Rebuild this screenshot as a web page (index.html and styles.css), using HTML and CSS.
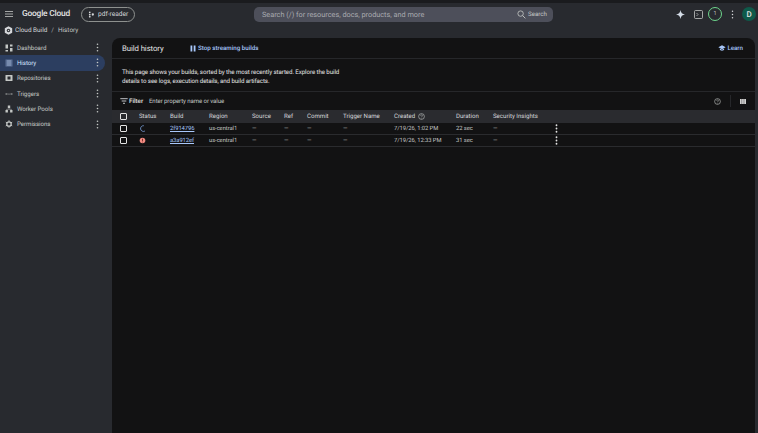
FILE: index.html
```html
<!DOCTYPE html>
<html lang="en">
<head>
<meta charset="utf-8">
<title>Build history</title>
<link rel="stylesheet" href="styles.css">
</head>
<body>
<div class="app">
  <header class="topbar">
    <svg class="menu-icon" viewBox="0 0 8 6"><path d="M0 .5h8M0 3h8M0 5.500h8" stroke="#c4c7c5" stroke-width=".8"/></svg>
    <span class="logo">Google Cloud</span>
    <div class="project">
      <svg class="ico7" viewBox="0 0 8 8"><circle cx="2" cy="1.500" r="1" fill="#d5d7da"/><circle cx="2" cy="4" r="1" fill="#d5d7da"/><circle cx="2" cy="6.500" r="1" fill="#d5d7da"/><circle cx="5.500" cy="4" r="1.300" fill="#d5d7da"/></svg>
      <span>pdf-reader</span>
    </div>
    <div class="search">
      <span class="search-hint">Search (/) for resources, docs, products, and more</span>
      <span class="search-btn">
        <svg class="ico9" viewBox="0 0 10 10"><circle cx="4" cy="4" r="3" fill="none" stroke="#c4c7c5" stroke-width=".9"/><path d="M6.200 6.200 9.300 9.300" stroke="#c4c7c5" stroke-width="1"/></svg>
        Search
      </span>
    </div>
    <div class="actions">
      <svg class="spark" viewBox="0 0 10 10"><path d="M5 0C5.400 3 7 4.600 10 5 7 5.400 5.400 7 5 10 4.600 7 3 5.400 0 5 3 4.600 4.600 3 5 0Z" fill="#d5dde8"/></svg>
      <svg class="term" viewBox="0 0 9 9"><rect x=".5" y=".5" width="8" height="8" rx="1" fill="none" stroke="#c4c7c5" stroke-width=".8"/><path d="M2.500 3 4 4.500 2.500 6" fill="none" stroke="#c4c7c5" stroke-width=".7"/></svg>
      <span class="badge">1</span>
      <svg class="kebab" viewBox="0 0 3 11"><circle cx="1.500" cy="1.500" r=".9" fill="#d5d7da"/><circle cx="1.500" cy="5.500" r=".9" fill="#d5d7da"/><circle cx="1.500" cy="9.500" r=".9" fill="#d5d7da"/></svg>
      <span class="avatar">D</span>
    </div>
  </header>
  <div class="crumbs">
    <svg class="product-icon" viewBox="0 0 10 10"><path d="M5 .3 9.100 2.600V7.400L5 9.700.9 7.400V2.600Z" fill="#d5d7da"/><circle cx="5" cy="5" r="1.900" fill="#282a2f"/><circle cx="5" cy="5" r=".8" fill="#d5d7da"/></svg>
    <span class="crumb-main">Cloud Build</span><span class="crumb-sep">/</span><span class="crumb-sub">History</span>
  </div>
  <div class="body-row">
    <aside class="sidebar">
      <nav class="nav">
        <div class="nav-item">
          <svg class="nav-ico" viewBox="0 0 8 8"><path d="M.5.500h2.500v4H.5zM5 .5h2.500v2H5zM5 4h2.500v3.500H5zM.5 6h2.500v1.500H.5z" fill="#c4c7c5"/></svg>
          <span class="nav-label">Dashboard</span>
          <svg class="nav-kebab" viewBox="0 0 3 11"><circle cx="1.500" cy="1.500" r="1" fill="#c4c7c5"/><circle cx="1.500" cy="5.500" r="1" fill="#c4c7c5"/><circle cx="1.500" cy="9.500" r="1" fill="#c4c7c5"/></svg>
        </div>
        <div class="nav-item is-active">
          <svg class="nav-ico" viewBox="0 0 8 8"><path d="M.5.500h7v7h-7z" fill="#5d7196"/><path d="M2 2h4M2 4h4M2 6h4" stroke="#a9bddb" stroke-width=".7"/></svg>
          <span class="nav-label">History</span>
          <svg class="nav-kebab" viewBox="0 0 3 11"><circle cx="1.500" cy="1.500" r="1" fill="#c4c7c5"/><circle cx="1.500" cy="5.500" r="1" fill="#c4c7c5"/><circle cx="1.500" cy="9.500" r="1" fill="#c4c7c5"/></svg>
        </div>
        <div class="nav-item">
          <svg class="nav-ico" viewBox="0 0 8 8"><rect x=".5" y="1" width="7" height="6" rx=".6" fill="#c4c7c5"/><rect x="2.500" y="2.500" width="3" height="3" fill="#282a2f"/></svg>
          <span class="nav-label">Repositories</span>
          <svg class="nav-kebab" viewBox="0 0 3 11"><circle cx="1.500" cy="1.500" r="1" fill="#c4c7c5"/><circle cx="1.500" cy="5.500" r="1" fill="#c4c7c5"/><circle cx="1.500" cy="9.500" r="1" fill="#c4c7c5"/></svg>
        </div>
        <div class="nav-item">
          <svg class="nav-ico" viewBox="0 0 8 8"><path d="M.5 4h2M5.500 4h2" stroke="#c4c7c5" stroke-width=".9"/><circle cx="4" cy="4" r=".6" fill="#c4c7c5"/></svg>
          <span class="nav-label">Triggers</span>
          <svg class="nav-kebab" viewBox="0 0 3 11"><circle cx="1.500" cy="1.500" r="1" fill="#c4c7c5"/><circle cx="1.500" cy="5.500" r="1" fill="#c4c7c5"/><circle cx="1.500" cy="9.500" r="1" fill="#c4c7c5"/></svg>
        </div>
        <div class="nav-item">
          <svg class="nav-ico" viewBox="0 0 8 8"><path d="M2.800.5h2.400v2.400H2.800zM.5 5h2.400v2.500H.5zM5.100 5h2.400v2.500H5.100z" fill="#c4c7c5"/><path d="M4 3v1.300M1.700 5V4.200h4.600V5" fill="none" stroke="#c4c7c5" stroke-width=".5"/></svg>
          <span class="nav-label">Worker Pools</span>
          <svg class="nav-kebab" viewBox="0 0 3 11"><circle cx="1.500" cy="1.500" r="1" fill="#c4c7c5"/><circle cx="1.500" cy="5.500" r="1" fill="#c4c7c5"/><circle cx="1.500" cy="9.500" r="1" fill="#c4c7c5"/></svg>
        </div>
        <div class="nav-item">
          <svg class="nav-ico" viewBox="0 0 8 8"><circle cx="4" cy="4" r="2.200" fill="none" stroke="#c4c7c5" stroke-width="1.300"/><path d="M4 .3v1.400M4 6.300v1.400M.8 2.200 2 2.900M6 5.100 7.200 5.800M.8 5.800 2 5.100M6 2.900 7.200 2.200" stroke="#c4c7c5" stroke-width="1"/></svg>
          <span class="nav-label">Permissions</span>
          <svg class="nav-kebab" viewBox="0 0 3 11"><circle cx="1.500" cy="1.500" r="1" fill="#c4c7c5"/><circle cx="1.500" cy="5.500" r="1" fill="#c4c7c5"/><circle cx="1.500" cy="9.500" r="1" fill="#c4c7c5"/></svg>
        </div>
      </nav>
    </aside>
    <main class="panel">
      <div class="title-row">
        <h1 class="title">Build history</h1>
        <a class="stream">
          <svg class="pause" viewBox="0 0 6 7"><path d="M.5.500h1.800v6H.5zM3.700.5h1.800v6H3.700z" fill="#a8c7fa"/></svg>
          Stop streaming builds
        </a>
        <a class="learn">
          <svg class="cap" viewBox="0 0 10 8"><path d="M5 .3 9.800 3 5 5.700.2 3Z" fill="#a8c7fa"/><path d="M2.200 4.800V6.500L5 7.800 7.800 6.500V4.800L5 6.300Z" fill="#a8c7fa"/></svg>
          Learn
        </a>
      </div>
      <p class="intro">This page shows your builds, sorted by the most recently started. Explore the build<br>details to see logs, execution details, and build artifacts.</p>
      <div class="filter-row">
        <svg class="filter-ico" viewBox="0 0 8 6"><path d="M.3.700h7.400M1.700 3h4.600M3 5.300h2" stroke="#d5d7da" stroke-width=".9"/></svg>
        <span class="filter-label">Filter</span>
        <span class="filter-hint">Enter property name or value</span>
        <svg class="help-ico" viewBox="0 0 8 8"><circle cx="4" cy="4" r="3.300" fill="none" stroke="#c4c7c5" stroke-width=".7"/><path d="M2.900 3.100C3 1.800 5.100 1.900 5.100 3.100 5.100 3.900 4 3.900 4 4.900" fill="none" stroke="#c4c7c5" stroke-width=".6"/><circle cx="4" cy="6" r=".4" fill="#c4c7c5"/></svg>
        <span class="vsep"></span>
        <svg class="cols-ico" viewBox="0 0 7 6"><path d="M0 0h1.900v6H0zM2.500 0h1.900v6H2.500zM5 0h2v6H5z" fill="#e3e3e3"/></svg>
      </div>
      <div class="table">
        <div class="tr th">
          <span class="c-check"><span class="box"></span></span>
          <span class="c-status">Status</span><span class="c-build">Build</span><span class="c-region">Region</span>
          <span class="c-source">Source</span><span class="c-ref">Ref</span><span class="c-commit">Commit</span>
          <span class="c-trigger">Trigger Name</span>
          <span class="c-created">Created
            <svg class="help-sm" viewBox="0 0 8 8"><circle cx="4" cy="4" r="3.300" fill="none" stroke="#c4c7c5" stroke-width=".7"/><path d="M2.900 3.100C3 1.800 5.100 1.900 5.100 3.100 5.100 3.900 4 3.900 4 4.900" fill="none" stroke="#c4c7c5" stroke-width=".6"/><circle cx="4" cy="6" r=".4" fill="#c4c7c5"/></svg>
          </span>
          <span class="c-duration">Duration</span><span class="c-insights">Security Insights</span>
        </div>
        <div class="tr">
          <span class="c-check"><span class="box"></span></span>
          <span class="c-status"><svg class="spinner" viewBox="0 0 8 8"><path d="M5.500.8A3.400 3.400 0 0 0 1.800 4.600 3.400 3.400 0 0 0 6.800 6.900" fill="none" stroke="#8ab4f8" stroke-width=".8"/></svg></span>
          <span class="c-build"><a class="link">2f914796</a></span><span class="c-region">us-central1</span>
          <span class="c-source">—</span><span class="c-ref">—</span><span class="c-commit">—</span><span class="c-trigger">—</span>
          <span class="c-created">7/19/26, 1:02 PM</span><span class="c-duration">22 sec</span><span class="c-insights">—</span>
          <svg class="row-kebab" viewBox="0 0 3 11"><circle cx="1.500" cy="1.500" r="1.100" fill="#e3e3e3"/><circle cx="1.500" cy="5.500" r="1.100" fill="#e3e3e3"/><circle cx="1.500" cy="9.500" r="1.100" fill="#e3e3e3"/></svg>
        </div>
        <div class="tr">
          <span class="c-check"><span class="box"></span></span>
          <span class="c-status"><svg class="err" viewBox="0 0 8 8"><circle cx="4" cy="4" r="3.200" fill="#f28b82"/><path d="M4 2v2.500M4 5.300v.8" stroke="#5a1a16" stroke-width=".9"/></svg></span>
          <span class="c-build"><a class="link">a3a912ef</a></span><span class="c-region">us-central1</span>
          <span class="c-source">—</span><span class="c-ref">—</span><span class="c-commit">—</span><span class="c-trigger">—</span>
          <span class="c-created">7/19/26, 12:33 PM</span><span class="c-duration">31 sec</span><span class="c-insights">—</span>
          <svg class="row-kebab" viewBox="0 0 3 11"><circle cx="1.500" cy="1.500" r="1.100" fill="#e3e3e3"/><circle cx="1.500" cy="5.500" r="1.100" fill="#e3e3e3"/><circle cx="1.500" cy="9.500" r="1.100" fill="#e3e3e3"/></svg>
        </div>
      </div>
    </main>
  </div>
</div>
</body>
</html>
```

FILE: styles.css
```css
* { box-sizing: border-box; }
html, body { margin: 0; height: 100%; }
body { background: #282a2f; color: #c4c7c5; font-family: Roboto, "Liberation Sans", sans-serif; font-size: 6.200px; overflow: hidden; text-rendering: geometricPrecision; }
.app { height: 433px; display: flex; flex-direction: column; border-top: 3px solid #1a1b1e; }
svg { display: block; flex: none; }

.topbar { height: 22px; display: flex; align-items: center; padding-left: 5px; flex: none; }
.menu-icon { width: 8px; height: 6px; }
.logo { margin-left: 9px; font-size: 8.400px; letter-spacing: -.2px; font-weight: 500; color: #e3e3e3; width: 59px; white-space: nowrap; }
.project { width: 54px; height: 15px; border: 1px solid #8e918f; border-radius: 8px; display: flex; align-items: center; gap: 3px; padding-left: 6px; color: #d5d7da; font-size: 6.600px; }
.ico7 { width: 7px; height: 7px; }
.search { margin-left: 119px; width: 299px; height: 15px; background: #4d4f5a; border-radius: 5px; display: flex; align-items: center; justify-content: space-between; padding: 0 6px 0 8px; color: #a9abb0; font-size: 7.300px; }
.search-btn { display: flex; align-items: center; gap: 2px; color: #c4c7c5; font-size: 6.200px; }
.ico9 { width: 9px; height: 9px; }
.actions { margin-left: 123px; display: flex; align-items: center; }
.spark { width: 9px; height: 9px; }
.term { width: 9px; height: 9px; margin-left: 9px; }
.badge { width: 14px; height: 14px; margin-left: 5px; border: 1px solid #6dd58c; border-radius: 50%; display: flex; align-items: center; justify-content: center; font-size: 5.500px; color: #c4c7c5; }
.kebab { width: 3px; height: 9px; margin-left: 9px; }
.avatar { width: 14px; height: 14px; margin-left: 8px; background: #0e5a4a; border-radius: 50%; display: flex; align-items: center; justify-content: center; font-size: 8px; font-weight: 500; color: #e3e3e3; }

.crumbs { height: 13px; flex: none; display: flex; align-items: center; padding: 0 0 3px 4px; font-size: 6.400px; }
.product-icon { width: 9px; height: 9px; margin-right: 2px; }
.crumb-main { color: #d5d7da; }
.crumb-sep { margin: 0 4px; color: #a9abb0; }
.crumb-sub { color: #c4c7c5; }
.body-row { flex: 1; display: flex; min-height: 0; }
.sidebar { width: 112px; flex: none; }
.nav { margin-top: 2px; display: flex; flex-direction: column; }
.nav-item { width: 105px; height: 15.300px; display: flex; align-items: center; padding: 0 6px 0 5px; border-radius: 0 8px 8px 0; color: #c4c7c5; font-size: 6.200px; letter-spacing: -.07px; }
.nav-item.is-active { background: #2c3e60; color: #d3e3fd; }
.nav-ico { width: 8px; height: 8px; margin-right: 4px; }
.nav-label { flex: 1; white-space: nowrap; }
.nav-kebab { width: 3px; height: 9px; }

.panel { flex: 1; margin-right: 3px; background: #121213; border-radius: 8px 8px 0 0; color: #c4c7c5; display: flex; flex-direction: column; min-width: 0; }
.title-row { height: 21px; display: flex; align-items: center; padding: 0 12px 0 10px; border-bottom: 1px solid #26272a; flex: none; }
.title { margin: 0; font-size: 7.800px; letter-spacing: -.1px; font-weight: 400; color: #e3e3e3; width: 68px; white-space: nowrap; }
.stream { display: flex; align-items: center; gap: 2px; color: #a8c7fa; font-size: 6.200px; font-weight: 500; }
.pause { width: 6px; height: 7px; }
.learn { margin-left: auto; display: flex; align-items: center; gap: 1px; color: #a8c7fa; font-size: 6.200px; font-weight: 500; }
.cap { width: 8px; height: 6px; }
.intro { margin: 0; height: 33px; padding: 9px 10px 0; font-size: 6.200px; letter-spacing: -.1px; line-height: 9px; color: #e3e3e3; border-bottom: 1px solid #26272a; flex: none; }
.filter-row { height: 18px; display: flex; align-items: center; padding: 0 9px 0 8px; flex: none; }
.filter-ico { width: 8px; height: 6px; margin-right: 1px; }
.filter-label { width: 20px; font-weight: 500; color: #e3e3e3; font-size: 6.200px; }
.filter-hint { flex: 1; color: #c4c7c5; font-size: 6.100px; letter-spacing: -.1px; }
.help-ico { width: 7px; height: 7px; }
.vsep { width: 1px; height: 12px; background: #26272a; margin: 0 9px; }
.cols-ico { width: 6px; height: 5px; }

.table { display: flex; flex-direction: column; flex: none; }
.tr { height: 12px; display: flex; align-items: center; border-bottom: 1px solid #2a2b2e; font-size: 5.800px; letter-spacing: -.05px; color: #c4c7c5; white-space: nowrap; }
.tr.th { height: 13px; background: #2a2b2f; color: #d5d7da; font-weight: 400; font-size: 6.100px; letter-spacing: 0; border-bottom: 0; }
.tr > span { flex: none; display: flex; align-items: center; }
.c-check { width: 27px; padding-left: 8px; }
.box { width: 7px; height: 7px; border: 1px solid #e3e3e3; border-radius: 1px; display: block; }
.c-status { width: 31px; }
.c-build { width: 39px; }
.c-region { width: 43px; }
.c-source { width: 32px; }
.c-ref { width: 23px; }
.c-commit { width: 36px; }
.c-trigger { width: 51px; }
.c-created { width: 62px; gap: 3px; }
.c-duration { width: 37px; }
.c-insights { width: 62px; }
.link { color: #a8c7fa; text-decoration: underline; }
.help-sm { width: 7px; height: 7px; }
.spinner, .err { width: 7px; height: 7px; }
.row-kebab { width: 3px; height: 9px; }
```
